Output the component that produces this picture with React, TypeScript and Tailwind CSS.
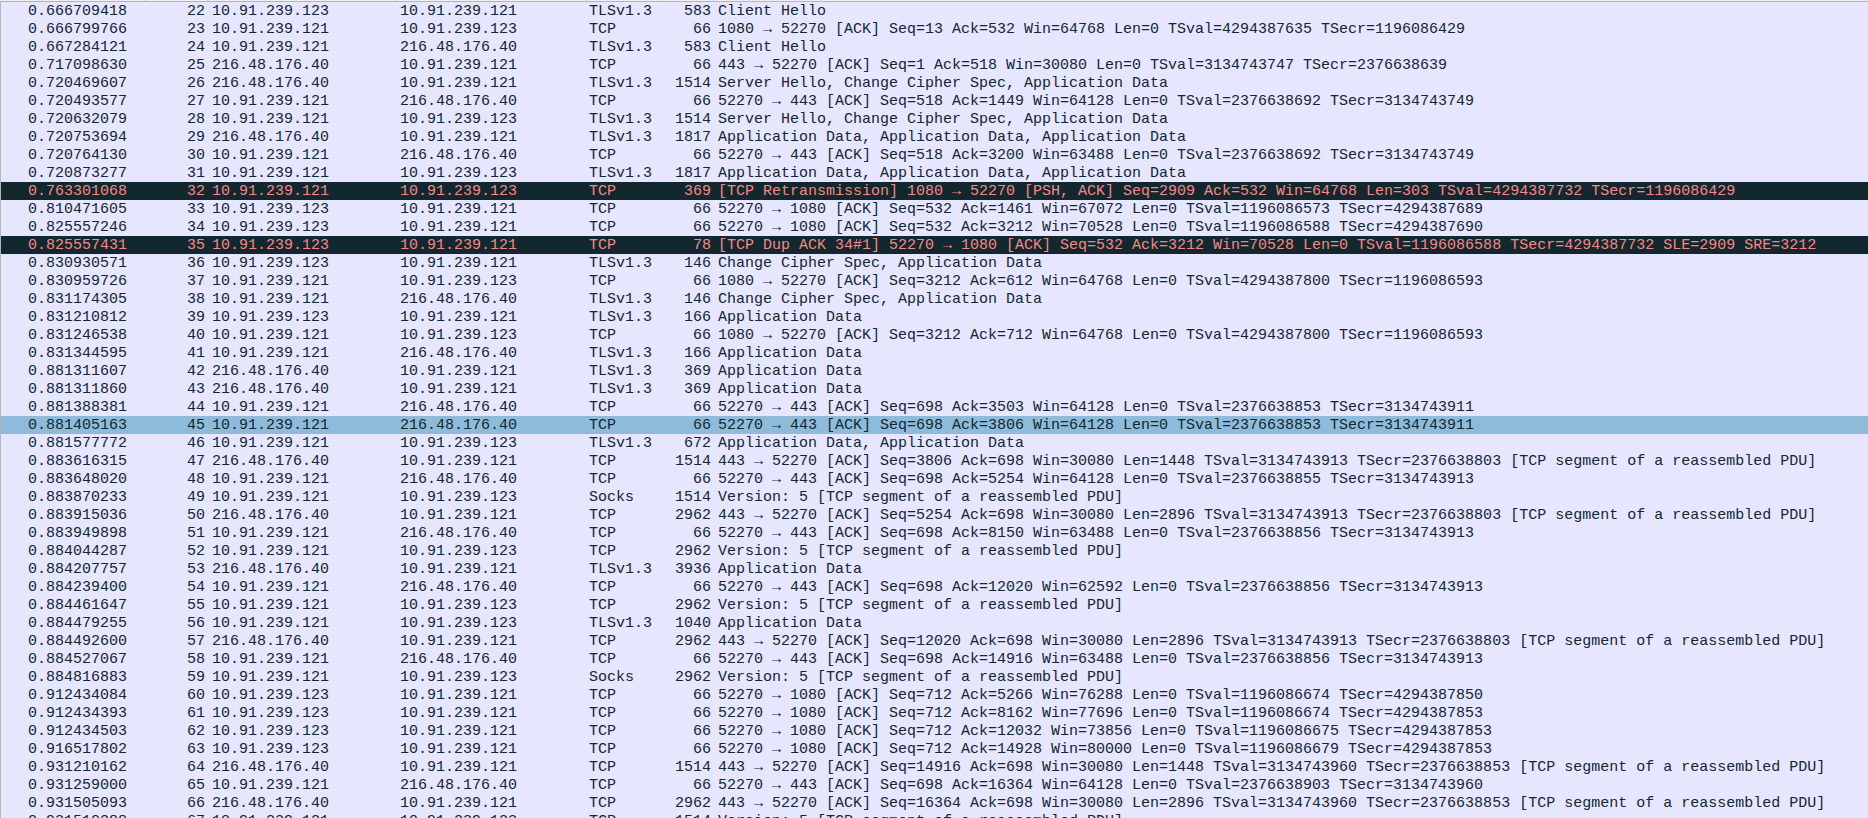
const A = '10.91.239.121';
const B = '10.91.239.123';
const G = '216.48.176.40';
const APP3 = 'Application Data, Application Data, Application Data';
const SEG = '[TCP segment of a reassembled PDU]';

type Row = [string, number, string, string, string, number, string, ('bad' | 'sel')?];

const rows: Row[] = [
  ['0.666709418', 22, B, A, 'TLSv1.3', 583, 'Client Hello'],
  ['0.666799766', 23, A, B, 'TCP', 66, '1080 → 52270 [ACK] Seq=13 Ack=532 Win=64768 Len=0 TSval=4294387635 TSecr=1196086429'],
  ['0.667284121', 24, A, G, 'TLSv1.3', 583, 'Client Hello'],
  ['0.717098630', 25, G, A, 'TCP', 66, '443 → 52270 [ACK] Seq=1 Ack=518 Win=30080 Len=0 TSval=3134743747 TSecr=2376638639'],
  ['0.720469607', 26, G, A, 'TLSv1.3', 1514, 'Server Hello, Change Cipher Spec, Application Data'],
  ['0.720493577', 27, A, G, 'TCP', 66, '52270 → 443 [ACK] Seq=518 Ack=1449 Win=64128 Len=0 TSval=2376638692 TSecr=3134743749'],
  ['0.720632079', 28, A, B, 'TLSv1.3', 1514, 'Server Hello, Change Cipher Spec, Application Data'],
  ['0.720753694', 29, G, A, 'TLSv1.3', 1817, APP3],
  ['0.720764130', 30, A, G, 'TCP', 66, '52270 → 443 [ACK] Seq=518 Ack=3200 Win=63488 Len=0 TSval=2376638692 TSecr=3134743749'],
  ['0.720873277', 31, A, B, 'TLSv1.3', 1817, APP3],
  ['0.763301068', 32, A, B, 'TCP', 369, '[TCP Retransmission] 1080 → 52270 [PSH, ACK] Seq=2909 Ack=532 Win=64768 Len=303 TSval=4294387732 TSecr=1196086429', 'bad'],
  ['0.810471605', 33, B, A, 'TCP', 66, '52270 → 1080 [ACK] Seq=532 Ack=1461 Win=67072 Len=0 TSval=1196086573 TSecr=4294387689'],
  ['0.825557246', 34, B, A, 'TCP', 66, '52270 → 1080 [ACK] Seq=532 Ack=3212 Win=70528 Len=0 TSval=1196086588 TSecr=4294387690'],
  ['0.825557431', 35, B, A, 'TCP', 78, '[TCP Dup ACK 34#1] 52270 → 1080 [ACK] Seq=532 Ack=3212 Win=70528 Len=0 TSval=1196086588 TSecr=4294387732 SLE=2909 SRE=3212', 'bad'],
  ['0.830930571', 36, B, A, 'TLSv1.3', 146, 'Change Cipher Spec, Application Data'],
  ['0.830959726', 37, A, B, 'TCP', 66, '1080 → 52270 [ACK] Seq=3212 Ack=612 Win=64768 Len=0 TSval=4294387800 TSecr=1196086593'],
  ['0.831174305', 38, A, G, 'TLSv1.3', 146, 'Change Cipher Spec, Application Data'],
  ['0.831210812', 39, B, A, 'TLSv1.3', 166, 'Application Data'],
  ['0.831246538', 40, A, B, 'TCP', 66, '1080 → 52270 [ACK] Seq=3212 Ack=712 Win=64768 Len=0 TSval=4294387800 TSecr=1196086593'],
  ['0.831344595', 41, A, G, 'TLSv1.3', 166, 'Application Data'],
  ['0.881311607', 42, G, A, 'TLSv1.3', 369, 'Application Data'],
  ['0.881311860', 43, G, A, 'TLSv1.3', 369, 'Application Data'],
  ['0.881388381', 44, A, G, 'TCP', 66, '52270 → 443 [ACK] Seq=698 Ack=3503 Win=64128 Len=0 TSval=2376638853 TSecr=3134743911'],
  ['0.881405163', 45, A, G, 'TCP', 66, '52270 → 443 [ACK] Seq=698 Ack=3806 Win=64128 Len=0 TSval=2376638853 TSecr=3134743911', 'sel'],
  ['0.881577772', 46, A, B, 'TLSv1.3', 672, 'Application Data, Application Data'],
  ['0.883616315', 47, G, A, 'TCP', 1514, `443 → 52270 [ACK] Seq=3806 Ack=698 Win=30080 Len=1448 TSval=3134743913 TSecr=2376638803 ${SEG}`],
  ['0.883648020', 48, A, G, 'TCP', 66, '52270 → 443 [ACK] Seq=698 Ack=5254 Win=64128 Len=0 TSval=2376638855 TSecr=3134743913'],
  ['0.883870233', 49, A, B, 'Socks', 1514, `Version: 5 ${SEG}`],
  ['0.883915036', 50, G, A, 'TCP', 2962, `443 → 52270 [ACK] Seq=5254 Ack=698 Win=30080 Len=2896 TSval=3134743913 TSecr=2376638803 ${SEG}`],
  ['0.883949898', 51, A, G, 'TCP', 66, '52270 → 443 [ACK] Seq=698 Ack=8150 Win=63488 Len=0 TSval=2376638856 TSecr=3134743913'],
  ['0.884044287', 52, A, B, 'TCP', 2962, `Version: 5 ${SEG}`],
  ['0.884207757', 53, G, A, 'TLSv1.3', 3936, 'Application Data'],
  ['0.884239400', 54, A, G, 'TCP', 66, '52270 → 443 [ACK] Seq=698 Ack=12020 Win=62592 Len=0 TSval=2376638856 TSecr=3134743913'],
  ['0.884461647', 55, A, B, 'TCP', 2962, `Version: 5 ${SEG}`],
  ['0.884479255', 56, A, B, 'TLSv1.3', 1040, 'Application Data'],
  ['0.884492600', 57, G, A, 'TCP', 2962, `443 → 52270 [ACK] Seq=12020 Ack=698 Win=30080 Len=2896 TSval=3134743913 TSecr=2376638803 ${SEG}`],
  ['0.884527067', 58, A, G, 'TCP', 66, '52270 → 443 [ACK] Seq=698 Ack=14916 Win=63488 Len=0 TSval=2376638856 TSecr=3134743913'],
  ['0.884816883', 59, A, B, 'Socks', 2962, `Version: 5 ${SEG}`],
  ['0.912434084', 60, B, A, 'TCP', 66, '52270 → 1080 [ACK] Seq=712 Ack=5266 Win=76288 Len=0 TSval=1196086674 TSecr=4294387850'],
  ['0.912434393', 61, B, A, 'TCP', 66, '52270 → 1080 [ACK] Seq=712 Ack=8162 Win=77696 Len=0 TSval=1196086674 TSecr=4294387853'],
  ['0.912434503', 62, B, A, 'TCP', 66, '52270 → 1080 [ACK] Seq=712 Ack=12032 Win=73856 Len=0 TSval=1196086675 TSecr=4294387853'],
  ['0.916517802', 63, B, A, 'TCP', 66, '52270 → 1080 [ACK] Seq=712 Ack=14928 Win=80000 Len=0 TSval=1196086679 TSecr=4294387853'],
  ['0.931210162', 64, G, A, 'TCP', 1514, `443 → 52270 [ACK] Seq=14916 Ack=698 Win=30080 Len=1448 TSval=3134743960 TSecr=2376638853 ${SEG}`],
  ['0.931259000', 65, A, G, 'TCP', 66, '52270 → 443 [ACK] Seq=698 Ack=16364 Win=64128 Len=0 TSval=2376638903 TSecr=3134743960'],
  ['0.931505093', 66, G, A, 'TCP', 2962, `443 → 52270 [ACK] Seq=16364 Ack=698 Win=30080 Len=2896 TSval=3134743960 TSecr=2376638853 ${SEG}`],
  ['0.931510288', 67, A, B, 'TCP', 1514, `Version: 5 ${SEG}`],
];

function PacketRow({ row }: { row: Row }) {
  const [time, no, src, dst, proto, len, info, mark] = row;
  const tone =
    mark === 'bad'
      ? 'bg-[#12272e] text-[#f78787]'
      : mark === 'sel'
        ? 'bg-[#8fbbdb] text-[#12272e]'
        : 'bg-[#e7e6ff] text-[#12272e]';
  return (
    <div className={`flex h-[18px] shrink-0 items-start leading-[20px] whitespace-pre ${tone}`}>
      <span className="w-[126px] shrink-0 text-right">{time}</span>
      <span className="w-[78px] shrink-0 text-right">{no}</span>
      <span className="ml-[7px] w-[188px] shrink-0">{src}</span>
      <span className="w-[189px] shrink-0">{dst}</span>
      <span className="w-[72px] shrink-0">{proto}</span>
      <span className="w-[50px] shrink-0 text-right">{len}</span>
      <span className="ml-[7px]">{info}</span>
    </div>
  );
}

// the bottom edge of the column header that is scrolled almost out of view
function HeaderEdge() {
  return (
    <div className="flex h-[2px] shrink-0 border-b border-[#b5b5b5] bg-[#efefef]">
      <div className="w-[145px] border-r border-[#cfcfcf]" />
      <div className="w-[63px] border-r border-[#cfcfcf]" />
      <div className="w-[189px] border-r border-[#cfcfcf]" />
      <div className="w-[189px] border-r border-[#cfcfcf]" />
      <div className="w-[72px] border-r border-[#cfcfcf]" />
      <div className="w-[56px] border-r border-[#cfcfcf]" />
    </div>
  );
}

export default function App() {
  return (
    <div className="flex h-screen flex-col overflow-hidden bg-[#e7e6ff] font-['Liberation_Mono',monospace] text-[15px]">
      <HeaderEdge />
      <div className="flex min-h-0 flex-1 flex-col overflow-hidden border-l border-[#b5b5b5]">
        {rows.map((row) => (
          <PacketRow key={row[1]} row={row} />
        ))}
      </div>
    </div>
  );
}
